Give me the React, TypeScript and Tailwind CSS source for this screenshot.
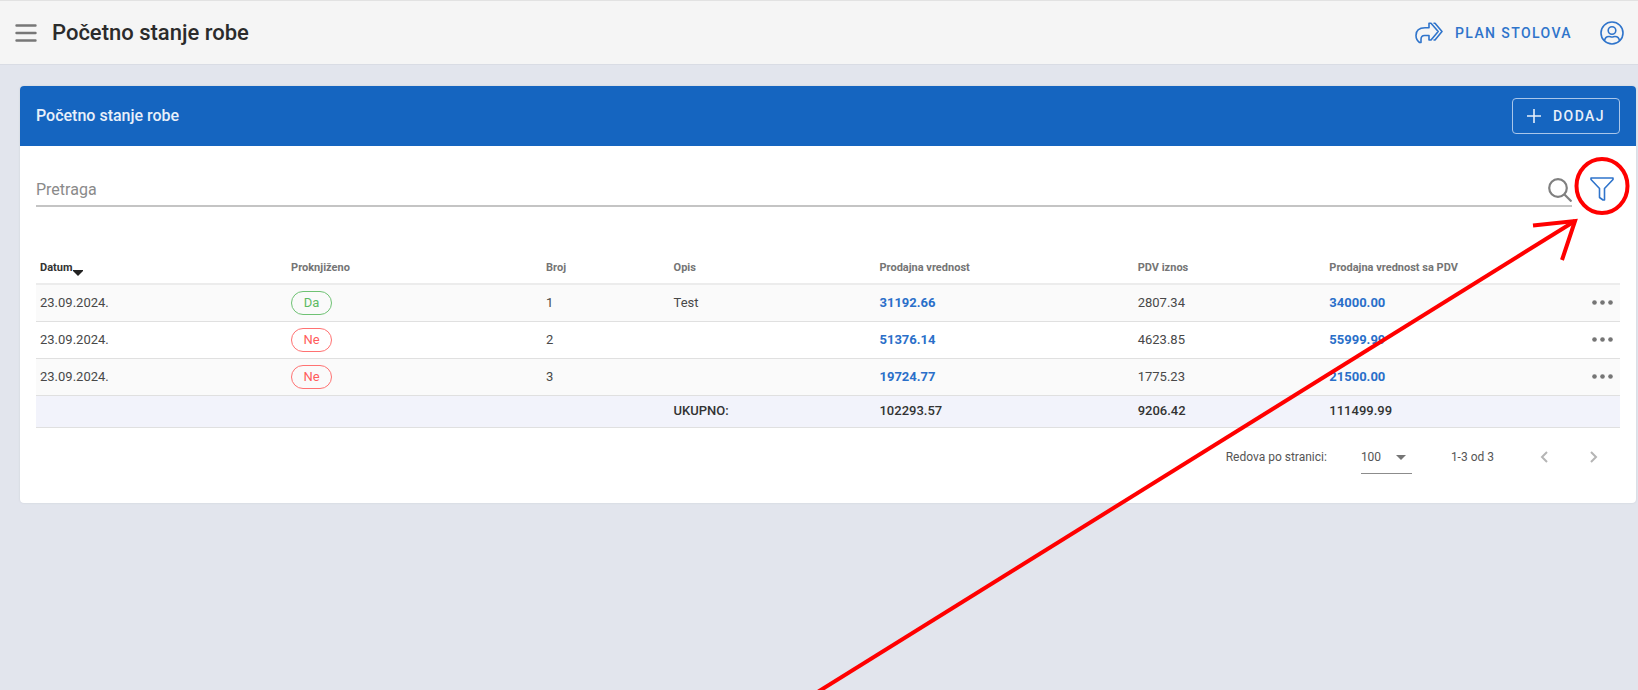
import { useState } from "react";

type Row = {
  date: string;
  posted: boolean;
  no: number;
  note: string;
  value: string;
  vat: string;
  total: string;
};

const rows: Row[] = [
  { date: "23.09.2024.", posted: true, no: 1, note: "Test", value: "31192.66", vat: "2807.34", total: "34000.00" },
  { date: "23.09.2024.", posted: false, no: 2, note: "", value: "51376.14", vat: "4623.85", total: "55999.99" },
  { date: "23.09.2024.", posted: false, no: 3, note: "", value: "19724.77", vat: "1775.23", total: "21500.00" }
];

function TopBar() {
  return (
    <header className="flex h-16 items-center border-t border-[#e2e2e2] bg-[#f5f5f5] pr-3.5 pl-[15px] shadow-[0_1px_0_#d9dce4]">
      <button aria-label="Meni" className="text-[#777]">
        <svg viewBox="0 0 22 20" className="h-5 w-[22px]" stroke="currentColor" strokeWidth="2.4" strokeLinecap="round">
          <path d="M1.5 2.5h19M1.5 10h19M1.5 17.5h19" />
        </svg>
      </button>
      <h1 className="ml-[15px] flex-1 text-[22px] leading-8 font-medium text-[#2b2b2b]">Početno stanje robe</h1>
      <a href="#plan" className="flex items-center gap-3 text-sm font-medium tracking-widest text-[#2f74cb]">
        <svg viewBox="0 0 28 22" className="h-[22px] w-7" fill="none" stroke="currentColor" strokeWidth="1.6" strokeLinejoin="round">
          <path d="M14 1.2h2L23.200 9.500 16 18h-2v-4.500H9.500C7 13.500 6 15 6 17.500v3H4.500C2.500 19 1 16.500 1 13.500 1 8.500 4.500 5.800 10 5.800h4Z" />
          <path d="M18.500 1.200h1.500L27 9.500 20 18h-1.500" />
        </svg>
        PLAN STOLOVA
      </a>
      <button aria-label="Korisnik" className="ml-7 text-[#2f74cb]">
        <svg viewBox="0 0 24 24" className="size-6" fill="none" stroke="currentColor" strokeWidth="1.6">
          <circle cx="12" cy="12" r="11" />
          <circle cx="12" cy="9.500" r="3.800" />
          <path d="M4.500 20c.3-3 2-4.500 4.500-4.500 1.500 0 1.500.5 3 .5s1.500-.5 3-.5c2.500 0 4.200 1.500 4.500 4.500" />
        </svg>
      </button>
    </header>
  );
}

function StatusChip({ posted }: { posted: boolean }) {
  return (
    <span
      className={`flex h-6 w-[41px] items-center justify-center rounded-full border text-[13px] ${
        posted ? "border-[#6fc274] text-[#5dbb63]" : "border-[#ff7272] text-[#ff5c5c]"
      }`}
    >
      {posted ? "Da" : "Ne"}
    </span>
  );
}

function StockTable() {
  return (
    <table className="mt-[41px] w-full table-fixed border-collapse text-left text-[13px] text-[#484848]">
      <colgroup>
        <col className="w-[15.85%]" />
        <col className="w-[16.1%]" />
        <col className="w-[8.05%]" />
        <col className="w-[13%]" />
        <col className="w-[16.3%]" />
        <col className="w-[12.1%]" />
        <col />
        <col className="w-10" />
      </colgroup>
      <thead>
        <tr className="h-9 border-b-2 border-[#ececec] text-[11px] text-[#757575]">
          <th className="px-1 pt-1.5 font-bold text-[#333]" aria-sort="descending">
            <button className="flex items-center">
              Datum
              <svg viewBox="0 0 10 6" className="mt-2 ml-px h-1.5 w-2.5" fill="#222">
                <path d="M0 0h10v1L5 6 0 1Z" />
              </svg>
            </button>
          </th>
          <th className="px-1 pt-1.5 font-bold">Proknjiženo</th>
          <th className="px-1 pt-1.5 font-bold">Broj</th>
          <th className="px-1 pt-1.5 font-bold">Opis</th>
          <th className="px-1 pt-1.5 font-bold">Prodajna vrednost</th>
          <th className="px-1 pt-1.5 font-bold">PDV iznos</th>
          <th className="px-1 pt-1.5 font-bold">Prodajna vrednost sa PDV</th>
          <th />
        </tr>
      </thead>
      <tbody>
        {rows.map((row) => (
          <tr key={row.no} className="h-[37px] border-b border-[#e0e0e0] odd:bg-[#fafafa]">
            <td className="px-1">{row.date}</td>
            <td className="px-1">
              <StatusChip posted={row.posted} />
            </td>
            <td className="px-1">{row.no}</td>
            <td className="px-1">{row.note}</td>
            <td className="px-1 font-bold text-[#2a6fc9]">{row.value}</td>
            <td className="px-1">{row.vat}</td>
            <td className="px-1 font-bold text-[#2a6fc9]">{row.total}</td>
            <td className="pr-[7px]">
              <button aria-label="Opcije" className="ml-auto block">
                <svg viewBox="0 0 21 5" className="h-[5px] w-[21px]" fill="#757575">
                  <circle cx="2.500" cy="2.500" r="2.300" />
                  <circle cx="10.500" cy="2.500" r="2.300" />
                  <circle cx="18.500" cy="2.500" r="2.300" />
                </svg>
              </button>
            </td>
          </tr>
        ))}
      </tbody>
      <tfoot>
        <tr className="h-8 border-b border-[#e0e0e0] bg-[#f2f3fb] font-medium text-[#333]">
          <td colSpan={3} />
          <td className="px-1">UKUPNO:</td>
          <td className="px-1">102293.57</td>
          <td className="px-1">9206.42</td>
          <td className="px-1">111499.99</td>
          <td />
        </tr>
      </tfoot>
    </table>
  );
}

function Pagination() {
  return (
    <div className="mt-[11px] flex h-16 items-start justify-end pr-[22px] text-xs text-[#555]">
      <label htmlFor="page-size" className="mt-2 leading-5">
        Redova po stranici:
      </label>
      <div className="relative ml-[34px] w-[51px] border-b border-[#8c8c8c]">
        <select id="page-size" defaultValue="100" className="h-[34px] w-full appearance-none bg-transparent pt-0.5 outline-none">
          <option>50</option>
          <option>100</option>
        </select>
        <svg viewBox="0 0 10 5" className="pointer-events-none absolute top-4 right-1.5 h-[5px] w-2.5" fill="#757575">
          <path d="M0 0h10L5 5Z" />
        </svg>
      </div>
      <span className="mt-2 ml-[39px] leading-5">1-3 od 3</span>
      <button aria-label="Prethodna" className="mt-3 ml-[46px]" disabled>
        <svg viewBox="0 0 8 12" className="h-3 w-2" fill="none" stroke="#b5b5b5" strokeWidth="2">
          <path d="M7 1 2 6l5 5" />
        </svg>
      </button>
      <button aria-label="Sledeća" className="mt-3 ml-[42px]" disabled>
        <svg viewBox="0 0 8 12" className="h-3 w-2" fill="none" stroke="#b5b5b5" strokeWidth="2">
          <path d="m1 1 5 5-5 5" />
        </svg>
      </button>
    </div>
  );
}

// Red marker pointing at the filter button
function FilterHint() {
  return (
    <svg
      viewBox="0 0 1638 690"
      className="pointer-events-none absolute top-0 right-0 h-[690px] w-[1638px]"
      fill="none"
      stroke="#ff0000"
      strokeWidth="4"
    >
      <ellipse cx="1602" cy="186" rx="25.500" ry="27" />
      <path d="M816 693 1575 221" />
      <path d="M1533 225.500 1575 221 1562 260" />
    </svg>
  );
}

export default function App() {
  const [query, setQuery] = useState("");

  return (
    <div className="relative min-h-screen overflow-hidden bg-[#e2e5ed] font-[Roboto,sans-serif]">
      <TopBar />
      <main className="pt-[22px] pr-0.5 pl-5">
        <section className="overflow-hidden rounded bg-white shadow-[0_0_2px_#c9ccd6]">
          <div className="flex h-[60px] items-center justify-between bg-[#1565c0] px-4 text-[#e8f0fa]">
            <h2 className="text-base font-medium">Početno stanje robe</h2>
            <button className="flex h-9 w-[108px] items-center justify-center gap-3 rounded border border-[#a9c6ea] text-sm font-medium tracking-widest">
              <svg viewBox="0 0 14 14" className="size-3.5" stroke="currentColor" strokeWidth="1.6">
                <path d="M7 0v14M0 7h14" />
              </svg>
              DODAJ
            </button>
          </div>

          <div className="px-4">
            <div className="flex pt-6">
              <div className="flex h-[37px] flex-1 items-center border-b-2 border-[#c4c4c4] pt-1">
                <input
                  type="text"
                  aria-label="Pretraga"
                  placeholder="Pretraga"
                  value={query}
                  onChange={(event) => setQuery(event.target.value)}
                  className="min-w-0 flex-1 bg-transparent text-base text-[#444] outline-none placeholder:text-[#8a8a8a]"
                />
                <svg viewBox="0 0 24 24" className="size-6" fill="none" stroke="#808080" strokeWidth="2.2">
                  <circle cx="10" cy="10" r="8.800" />
                  <path d="m16.500 16.500 7 7" />
                </svg>
              </div>
              <button aria-label="Filter" className="mr-1.5 ml-[18px] text-[#2f74cb]">
                <svg viewBox="0 0 24 24" className="size-6" fill="none" stroke="currentColor" strokeWidth="1.6" strokeLinejoin="round">
                  <path d="M1 1h22v1.500L14.500 11.500V23h-1.500l-3.500-2.500v-9L1 2.500Z" />
                </svg>
              </button>
            </div>

            <StockTable />
            <Pagination />
          </div>
        </section>
      </main>
      <FilterHint />
    </div>
  );
}
